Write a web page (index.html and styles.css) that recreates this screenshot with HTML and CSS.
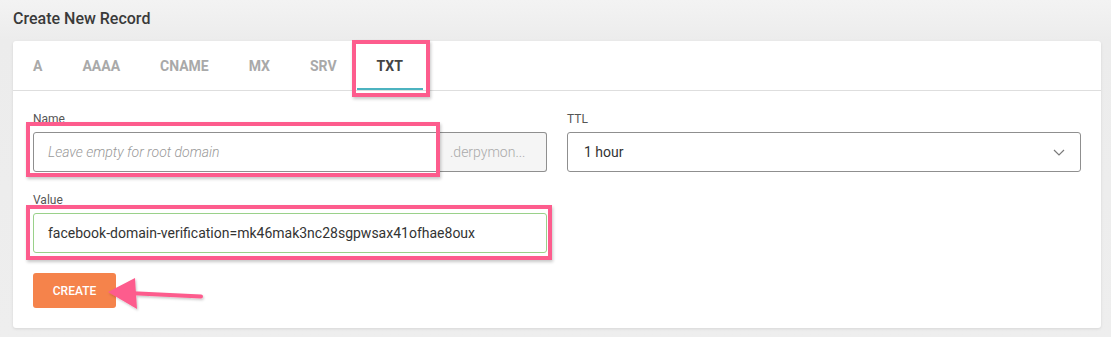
FILE: index.html
```html
<!DOCTYPE html>
<html lang="en">
<head>
<meta charset="utf-8">
<title>Create New Record</title>
<link rel="stylesheet" href="styles.css">
</head>
<body>
  <h1 class="page-title">Create New Record</h1>
  <section class="card">
    <nav class="tabs">
      <span class="tab">A</span>
      <span class="tab">AAAA</span>
      <span class="tab">CNAME</span>
      <span class="tab">MX</span>
      <span class="tab">SRV</span>
      <span class="tab active">TXT</span>
    </nav>
    <form class="form">
      <div class="grid">
        <div class="field">
          <label class="label">Name</label>
          <div class="group">
            <div class="input placeholder">Leave empty for root domain</div>
            <div class="addon">.derpymon...</div>
          </div>
        </div>
        <div class="field">
          <label class="label">TTL</label>
          <div class="select">
            <span>1 hour</span>
            <svg class="chev" width="12" height="7" viewBox="0 0 12 7"><path d="M1 1 L6 6 L11 1" fill="none" stroke="#7a7a7a" stroke-width="1.2"/></svg>
          </div>
        </div>
        <div class="field">
          <label class="label">Value</label>
          <div class="input value">facebook-domain-verification=mk46mak3nc28sgpwsax41ofhae8oux</div>
        </div>
      </div>
      <button type="button" class="btn">CREATE</button>
    </form>
  </section>

  <div class="hl hl-tab"></div>
  <div class="hl hl-name"></div>
  <div class="hl hl-value"></div>
  <svg class="arrow" width="1111" height="337" viewBox="0 0 1111 337">
    <g filter="url(#sh)">
      <path d="M128 293 L201 296.5" stroke="#fd5c8d" stroke-width="4" stroke-linecap="round"/>
      <polygon points="108,292 135,278 137,309" fill="#fd5c8d"/>
    </g>
    <defs>
      <filter id="sh" x="-10%" y="-30%" width="130%" height="170%">
        <feDropShadow dx="1" dy="1.5" stdDeviation="1.2" flood-color="#000" flood-opacity="0.22"/>
      </filter>
    </defs>
  </svg>
</body>
</html>
```
FILE: styles.css
```css
* { box-sizing: border-box; }
html, body { height: 100%; }
body {
  margin: 0;
  padding: 10px 10px 0 13px;
  position: relative;
  font-family: Roboto, "Liberation Sans", Arial, sans-serif;
  background: linear-gradient(#f3f3f3, #ececec 40px, #eeeeee);
  color: #333;
  overflow: hidden;
}
.page-title {
  margin: 0 0 13px;
  font-size: 16px;
  line-height: 18px;
  font-weight: 500;
  color: #3a3a3a;
}
.card {
  background: #fff;
  border-radius: 3px;
  box-shadow: 0 1px 3px rgba(0,0,0,0.1);
}
.tabs {
  display: flex;
  height: 50px;
  border-bottom: 1px solid #dedede;
}
.tab {
  display: flex;
  align-items: center;
  padding: 0 20px;
  height: 49px;
  font-size: 14px;
  font-weight: 700;
  color: #a9a9a9;
}
.tab.active {
  color: #444;
  box-shadow: inset 0 -2px 0 #4cb3c0;
}
.form {
  padding: 20px;
}
.grid {
  display: grid;
  grid-template-columns: 1fr 1fr;
  column-gap: 20px;
  row-gap: 20px;
}
.label {
  display: block;
  font-size: 12px;
  line-height: 16px;
  color: #555;
  margin-bottom: 5px;
}
.group { display: flex; height: 40px; }
.input {
  height: 40px;
  border: 1px solid #8f8f8f;
  border-radius: 3px;
  padding: 0 14px;
  display: flex;
  align-items: center;
  font-size: 14px;
  color: #333;
  background: #fff;
}
.group .input {
  flex: 1;
  border-radius: 3px 0 0 3px;
}
.placeholder {
  font-style: italic;
  font-weight: 300;
  color: #999;
}
.addon {
  width: 110px;
  border: 1px solid #8f8f8f;
  border-left: none;
  border-radius: 0 3px 3px 0;
  background: #f5f5f5;
  color: #aaa;
  font-size: 14px;
  display: flex;
  align-items: center;
  padding-left: 13px;
  font-weight: 300;
}
.input.value {
  border-color: #9ad18a;
}
.select {
  height: 40px;
  border: 1px solid #8f8f8f;
  border-radius: 3px;
  display: flex;
  align-items: center;
  justify-content: space-between;
  padding: 0 15px 0 16px;
  font-size: 14px;
  color: #333;
}
.btn {
  margin-top: 20px;
  height: 35px;
  width: 83px;
  border: none;
  border-radius: 3px;
  background: #f5834b;
  color: #fff;
  font-family: inherit;
  font-size: 12px;
  font-weight: 500;
  display: block;
  padding: 0;
}
.hl {
  position: absolute;
  border: 4px solid #fd5c8d;
  box-shadow: 1px 2px 3px rgba(0,0,0,0.22);
}
.hl-tab { left: 352px; top: 40px; width: 78px; height: 57px; }
.hl-name { left: 26px; top: 122px; width: 414px; height: 55px; }
.hl-value { left: 26px; top: 205px; width: 526px; height: 55px; }
.arrow { position: absolute; left: 0; top: 0; pointer-events: none; }
```
